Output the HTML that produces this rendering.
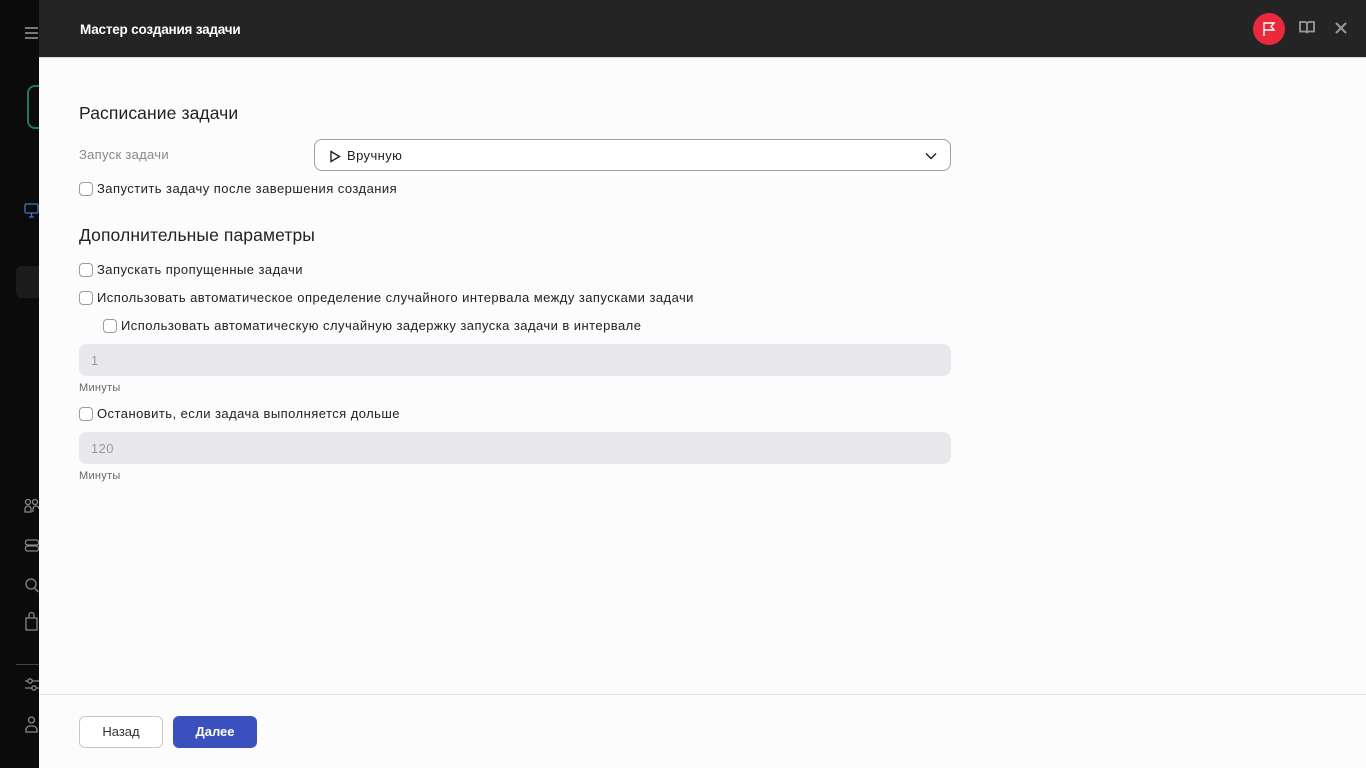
<!DOCTYPE html>
<html><head><meta charset="utf-8"><style>
*{box-sizing:border-box;margin:0;padding:0}
body{width:1366px;height:768px;overflow:hidden;background:#0b0b0b;font-family:"Liberation Sans",sans-serif;position:relative;color:#1f1f1f}
.side{position:absolute;left:0;top:0;width:39px;height:768px;background:#0b0b0b}
.panel{position:absolute;left:39px;top:0;width:1327px;height:768px;background:#fcfcfc}
.hdr{height:58px;background:#242424;color:#fff;font-weight:bold;font-size:13.5px;padding:22px 0 0 41px;border-bottom:1px solid #ddd;letter-spacing:-0.2px}
.abs{position:absolute}
h2{position:absolute;font-size:17.5px;font-weight:normal;color:#222;letter-spacing:0.1px}
.cb{position:absolute;font-size:13px;color:#222;display:flex;align-items:center;letter-spacing:0.45px}
.cb i{width:14px;height:14px;border:1px solid #9a9aa8;border-radius:4px;margin-right:4px;background:#fff;display:inline-block}
.inp{position:absolute;left:40px;width:872px;height:32px;border-radius:8px;background:#e7e7ec;color:#9a9aa2;font-size:13px;padding:9px 12px;letter-spacing:0.4px}
.lbl{position:absolute;left:40px;font-size:11px;color:#666;letter-spacing:0.3px}
</style></head><body>
<div class="side">
<div class="abs" style="left:25px;top:27px;width:13px;height:2px;background:#777;box-shadow:0 5px 0 #777,0 10px 0 #777"></div>
<div class="abs" style="left:27px;top:85px;width:14px;height:44px;border:2px solid #1a7a63;border-right:none;border-radius:8px 0 0 8px"></div>
<svg class="abs" style="left:24px;top:203px" width="15" height="15" fill="none" stroke="#4a72c4" stroke-width="1.3"><rect x="1" y="1" width="13" height="9" rx="1.5"/><path d="M5 14h5M7.5 10v4"/></svg>
<div class="abs" style="left:16px;top:266px;width:23px;height:32px;background:#1c1c1c;border-radius:6px 0 0 6px"></div>
<svg class="abs" style="left:24px;top:498px" width="15" height="140" fill="none" stroke="#888" stroke-width="1.3">
<circle cx="4" cy="4" r="2.5"/><circle cx="11" cy="4" r="2.5"/><path d="M1 14v-3a3 3 0 0 1 6 0v3zM9 14v-3a3 3 0 0 1 6 0"/>
<rect x="1.5" y="42" width="13" height="5" rx="2"/><rect x="1.5" y="48" width="13" height="5" rx="2"/>
<circle cx="7" cy="86" r="5"/><path d="M10.5 90l4 4"/>
<path d="M2 120h11v12H2zM5 120v-3a2.5 2.5 0 0 1 5 0v3"/>
</svg>
<div class="abs" style="left:16px;top:664px;width:23px;height:1px;background:#444"></div>
<svg class="abs" style="left:24px;top:676px" width="15" height="60" fill="none" stroke="#888" stroke-width="1.3"><path d="M1 5h15M1 12h15"/><circle cx="6" cy="5" r="2.2" fill="#0b0b0b"/><circle cx="10" cy="12" r="2.2" fill="#0b0b0b"/><circle cx="7.5" cy="44" r="3"/><path d="M2 56v-2a4 4 0 0 1 4-4h3a4 4 0 0 1 4 4v2z"/></svg>
</div>
<div class="panel">
<div class="hdr">Мастер создания задачи</div>
<div class="abs" style="left:1214px;top:13px;width:32px;height:32px;border-radius:50%;background:#ea2a3c"></div>
<svg class="abs" style="left:1222px;top:20px" width="16" height="18" fill="none" stroke="#fff" stroke-width="1.4"><path d="M3 16V3h10l-3 3.5 3 3.5H3"/></svg>
<svg class="abs" style="left:1260px;top:20px" width="16" height="14" fill="none" stroke="#999" stroke-width="1.8"><path d="M1 2h5a2 2 0 0 1 2 2v9a2 2 0 0 0-2-1.5H1zM15 2h-5a2 2 0 0 0-2 2v9a2 2 0 0 1 2-1.5h5z"/></svg>
<svg class="abs" style="left:1296px;top:22px" width="12" height="12" stroke="#999" stroke-width="2"><path d="M1 1l10 10M11 1L1 11"/></svg>
<h2 style="left:40px;top:103px">Расписание задачи</h2>
<div class="abs" style="left:40px;top:147px;font-size:13px;color:#888;letter-spacing:0.3px">Запуск задачи</div>
<div class="abs" style="left:275px;top:139px;width:637px;height:32px;border:1px solid #9d9dab;border-radius:8px;background:#fff;font-size:13px;padding:8px 12px 8px 32px;letter-spacing:0.4px">Вручную
<svg class="abs" style="left:14px;top:10px" width="12" height="13" fill="none" stroke="#222" stroke-width="1.4"><path d="M2 1.5v10l8.5-5z"/></svg>
<svg class="abs" style="right:13px;top:12px" width="12" height="8" fill="none" stroke="#222" stroke-width="1.5"><path d="M1 1.5l5 5 5-5"/></svg></div>
<div class="cb" style="left:40px;top:181px"><i></i>Запустить задачу после завершения создания</div>
<h2 style="left:40px;top:225px">Дополнительные параметры</h2>
<div class="cb" style="left:40px;top:262px"><i></i>Запускать пропущенные задачи</div>
<div class="cb" style="left:40px;top:290px"><i></i>Использовать автоматическое определение случайного интервала между запусками задачи</div>
<div class="cb" style="left:64px;top:318px"><i></i>Использовать автоматическую случайную задержку запуска задачи в интервале</div>
<div class="inp" style="top:344px">1</div>
<div class="lbl" style="top:382px">Минуты</div>
<div class="cb" style="left:40px;top:406px"><i></i>Остановить, если задача выполняется дольше</div>
<div class="inp" style="top:432px">120</div>
<div class="lbl" style="top:470px">Минуты</div>
<div class="abs" style="left:0;top:694px;width:1327px;height:1px;background:#e4e4e4"></div>
<div class="abs" style="left:40px;top:716px;width:84px;height:32px;border:1px solid #c8c8c8;border-radius:6px;background:#fff;font-size:13px;text-align:center;line-height:30px;color:#333">Назад</div>
<div class="abs" style="left:134px;top:716px;width:84px;height:32px;border-radius:6px;background:#3b50bf;color:#fff;font-weight:bold;font-size:13px;text-align:center;line-height:32px">Далее</div>
</div>
</body></html>
